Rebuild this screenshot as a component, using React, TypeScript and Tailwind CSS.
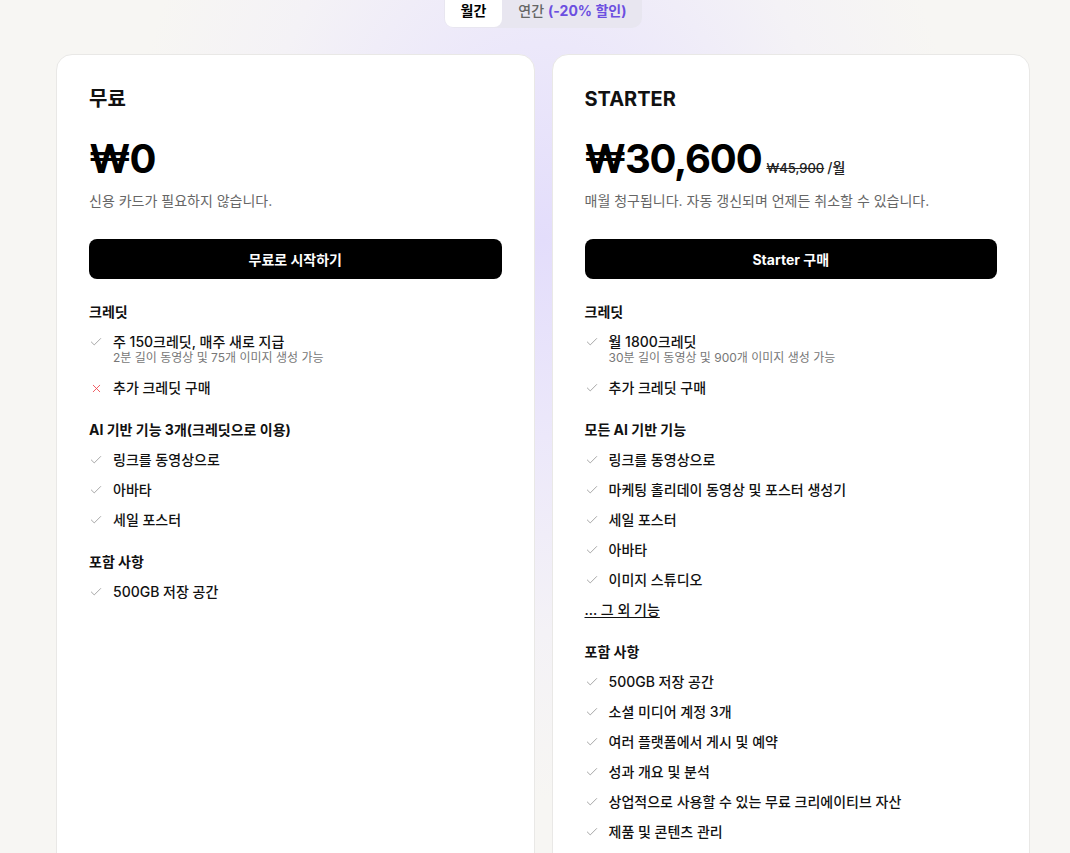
import React from "react";
import { Check, X } from "lucide-react";

type Item = { text: string; sub?: string; no?: boolean };
type Section = { title: string; items: Item[]; link?: string };

const freeSections: Section[] = [
  {
    title: "크레딧",
    items: [
      { text: "주 150크레딧, 매주 새로 지급", sub: "2분 길이 동영상 및 75개 이미지 생성 가능" },
      { text: "추가 크레딧 구매", no: true },
    ],
  },
  {
    title: "AI 기반 기능 3개(크레딧으로 이용)",
    items: [{ text: "링크를 동영상으로" }, { text: "아바타" }, { text: "세일 포스터" }],
  },
  { title: "포함 사항", items: [{ text: "500GB 저장 공간" }] },
];

const starterSections: Section[] = [
  {
    title: "크레딧",
    items: [
      { text: "월 1800크레딧", sub: "30분 길이 동영상 및 900개 이미지 생성 가능" },
      { text: "추가 크레딧 구매" },
    ],
  },
  {
    title: "모든 AI 기반 기능",
    items: [
      { text: "링크를 동영상으로" },
      { text: "마케팅 홀리데이 동영상 및 포스터 생성기" },
      { text: "세일 포스터" },
      { text: "아바타" },
      { text: "이미지 스튜디오" },
    ],
    link: "... 그 외 기능",
  },
  {
    title: "포함 사항",
    items: [
      { text: "500GB 저장 공간" },
      { text: "소셜 미디어 계정 3개" },
      { text: "여러 플랫폼에서 게시 및 예약" },
      { text: "성과 개요 및 분석" },
      { text: "상업적으로 사용할 수 있는 무료 크리에이티브 자산" },
      { text: "제품 및 콘텐츠 관리" },
    ],
  },
];

function Sections({ sections }: { sections: Section[] }) {
  return (
    <div className="flex flex-col gap-[22px]">
      {sections.map((s) => (
        <div key={s.title} className="flex flex-col gap-[10px]">
          <div className="text-[14px] leading-5 font-bold text-[#111]">{s.title}</div>
          {s.items.map((it) => (
            <div key={it.text} className="flex items-start gap-[10px]">
              <div className="w-[14px] h-5 flex items-center justify-center shrink-0">
                {it.no ? (
                  <X size={13} strokeWidth={1.6} color="#f0444b" />
                ) : (
                  <Check size={14} strokeWidth={1.5} color="#9a9a9a" />
                )}
              </div>
              <div className="flex flex-col">
                <span className="text-[14px] leading-5 font-medium text-[#111]">{it.text}</span>
                {it.sub && (
                  <span className="text-[12px] leading-4 -mt-[2px] mb-[2px] text-[#777]">{it.sub}</span>
                )}
              </div>
            </div>
          ))}
          {s.link && (
            <div className="text-[14px] leading-5 font-medium text-[#111] underline underline-offset-2">
              {s.link}
            </div>
          )}
        </div>
      ))}
    </div>
  );
}

function Card({
  title,
  price,
  old,
  desc,
  cta,
  sections,
}: {
  title: string;
  price: string;
  old?: boolean;
  desc: string;
  cta: string;
  sections: Section[];
}) {
  return (
    <div className="flex-1 bg-white border border-[#e9e8e6] rounded-[16px] px-8 pt-[30px] pb-10">
      <div className="text-[20px] leading-7 font-bold text-[#111]">{title}</div>
      <div className="mt-[22px] flex items-baseline gap-[5px]">
        <span className="text-[40px] leading-[48px] font-bold text-black tracking-[-0.03em]">{price}</span>
        {old && (
          <span className="text-[13px] font-medium text-[#222]">
            <span className="line-through">₩45,900</span>
            <span className="ml-[3px] text-[14px]">/월</span>
          </span>
        )}
      </div>
      <div className="mt-2 text-[14px] leading-5 text-[#666]">{desc}</div>
      <button className="mt-[28px] w-full h-10 rounded-[8px] bg-black text-white text-[14px] font-bold">
        {cta}
      </button>
      <div className="mt-[23px]">
        <Sections sections={sections} />
      </div>
    </div>
  );
}

export default function App() {
  return (
    <div
      className="min-h-[853px] h-[853px] overflow-hidden bg-[#f7f6f3] bg-[radial-gradient(ellipse_420px_560px_at_543px_240px,#e3ddfb_0%,#ece8fa_35%,#f4f2f6_70%,#f7f6f3_100%)]"
      style={{ fontFamily: 'Inter, "Noto Sans CJK KR", "Noto Sans", sans-serif' }}
    >
      <div className="pl-[56px] pr-[40px]">
        <div className="flex justify-center -mt-[9px]">
          <div className="flex items-center bg-[#e8e6f0] rounded-[10px] p-[1px] pr-4">
            <div className="bg-white rounded-[8px] h-[35px] px-4 flex items-center pt-[2px] text-[14px] font-bold text-black">
              월간
            </div>
            <div className="pl-4 flex items-center h-[35px] pt-[2px] text-[14px] font-medium text-[#666]">
              연간
              <span className="ml-1 font-bold text-[#6c4fe0]">(-20% 할인)</span>
            </div>
          </div>
        </div>
        <div className="mt-[26px] flex gap-[17px]">
          <Card
            title="무료"
            price="₩0"
            desc="신용 카드가 필요하지 않습니다."
            cta="무료로 시작하기"
            sections={freeSections}
          />
          <Card
            title="STARTER"
            price="₩30,600"
            old
            desc="매월 청구됩니다. 자동 갱신되며 언제든 취소할 수 있습니다."
            cta="Starter 구매"
            sections={starterSections}
          />
        </div>
      </div>
    </div>
  );
}
